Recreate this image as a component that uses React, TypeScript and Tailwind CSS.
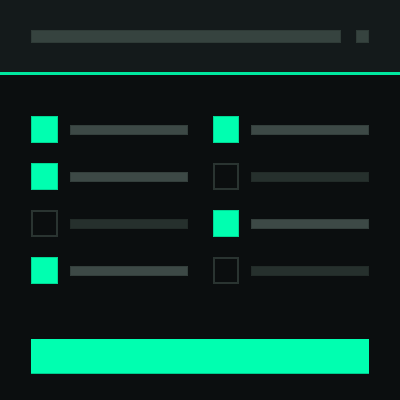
import React from 'react';

const items = [
  [true, true],
  [true, false],
  [false, true],
  [true, false],
];

function Item({ checked }: { checked: boolean }) {
  return (
    <div className="flex items-center gap-3">
      <div
        className={
          checked
            ? 'w-[27px] h-[27px] bg-[#00ffb0] border border-[#00d894]'
            : 'w-[27px] h-[27px] border-2 border-[#2a3431]'
        }
      />
      <div
        className={
          checked
            ? 'h-[10px] w-[118px] bg-[#3d4946] border border-[#343f3c]'
            : 'h-[10px] w-[118px] bg-[#26302d] border border-[#222b28]'
        }
      />
    </div>
  );
}

export default function App() {
  return (
    <div className="w-[400px] h-[400px] bg-[#0b0e0f] flex flex-col">
      {/* Header */}
      <div className="h-[75px] bg-[#141a1b] border-b-[3px] border-[#00e8a0] flex items-start pt-[30px] px-[31px] gap-[15px]">
        <div className="h-[13px] w-[310px] bg-[#36433f] border border-[#2f3b37]" />
        <div className="h-[13px] w-[13px] bg-[#36433f] border border-[#2f3b37]" />
      </div>

      {/* Checklist */}
      <div className="grid grid-cols-2 gap-x-[25px] gap-y-[20px] px-[31px] pt-[41px]">
        {items.map((row, i) => (
          <React.Fragment key={i}>
            <Item checked={row[0]} />
            <Item checked={row[1]} />
          </React.Fragment>
        ))}
      </div>

      {/* Button */}
      <div className="px-[31px] pt-[55px]">
        <div className="h-[35px] bg-[#00ffb0] border-b border-[#00c98c]" />
      </div>
    </div>
  );
}
